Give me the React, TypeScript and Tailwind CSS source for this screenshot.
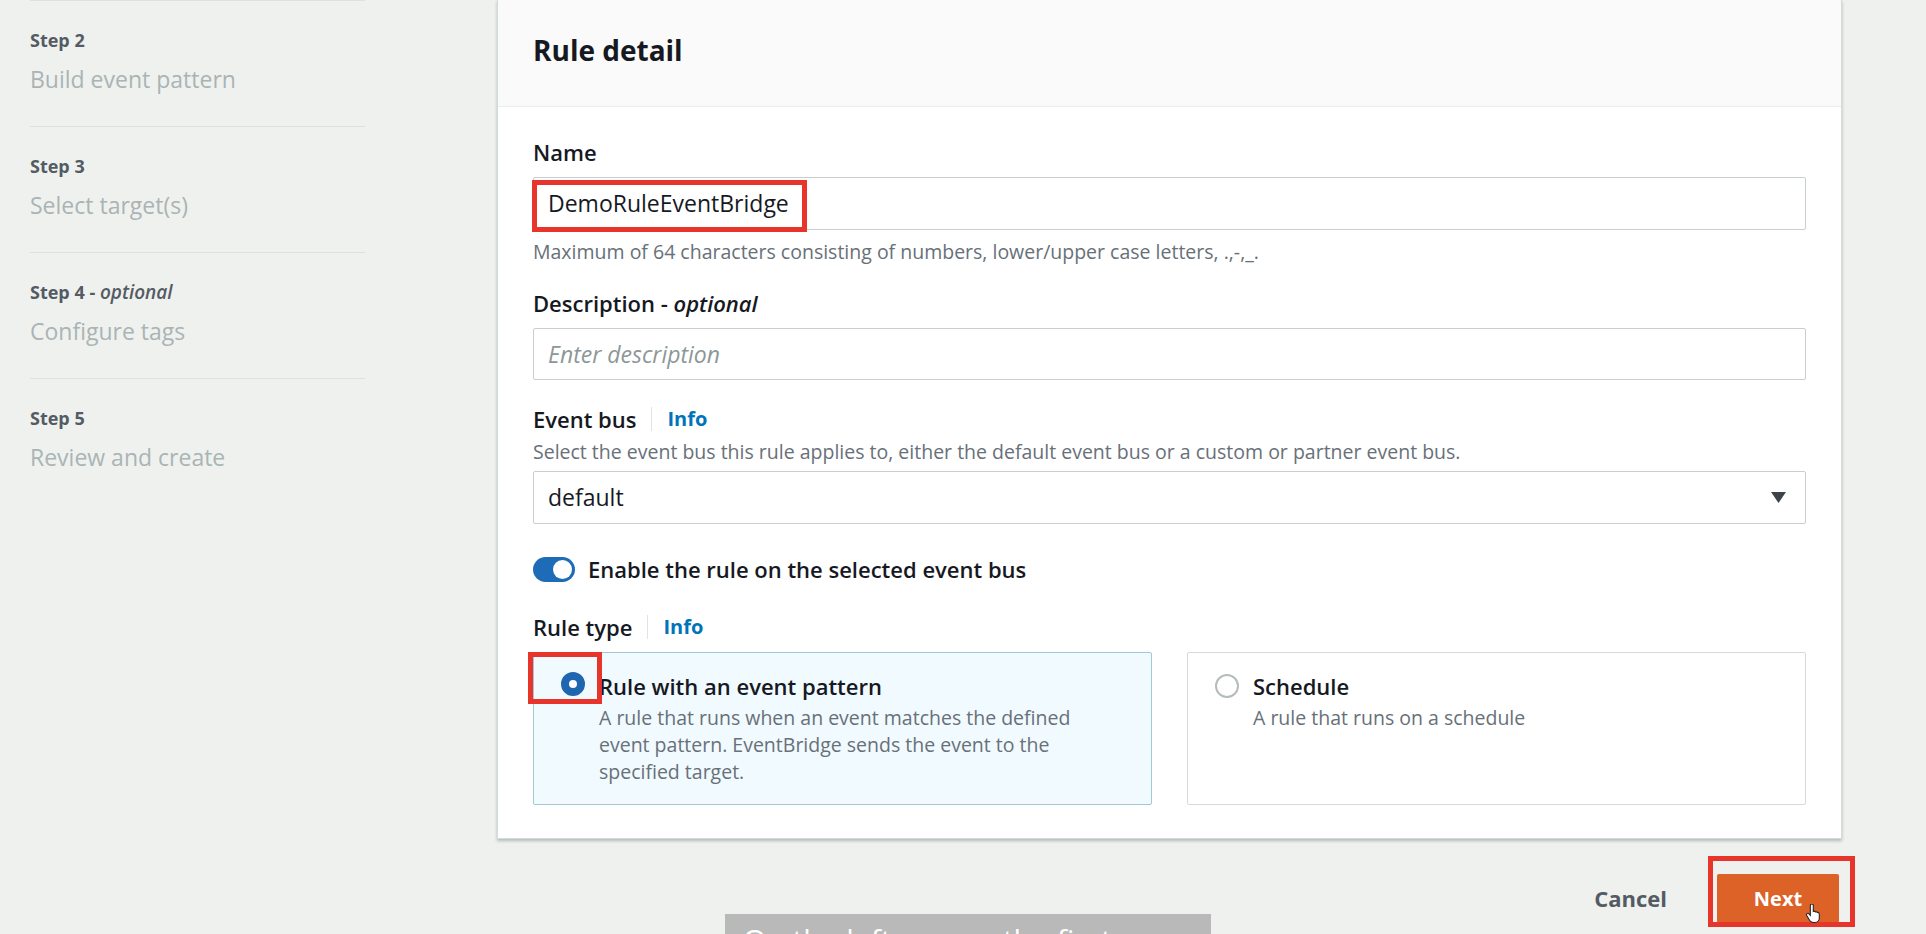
import type { ReactNode } from "react";

const steps = [
  { id: 2, title: "Build event pattern", optional: false },
  { id: 3, title: "Select target(s)", optional: false },
  { id: 4, title: "Configure tags", optional: true },
  { id: 5, title: "Review and create", optional: false },
];

const ruleTypes = [
  {
    id: "pattern",
    title: "Rule with an event pattern",
    lines: [
      "A rule that runs when an event matches the defined",
      "event pattern. EventBridge sends the event to the",
      "specified target.",
    ],
    selected: true,
  },
  {
    id: "schedule",
    title: "Schedule",
    lines: ["A rule that runs on a schedule"],
    selected: false,
  },
];

const FieldLabel = ({ children, info }: { children: ReactNode; info?: boolean }) => (
  <div className="flex items-center h-[28px] text-[22px] leading-[28px] font-semibold text-[#16191f]">
    {children}
    {info && (
      <>
        <span className="mx-[15px] h-[24px] w-px bg-[#e1e4e4]" />
        <span className="text-[20px] font-bold text-[#0073bb]">Info</span>
      </>
    )}
  </div>
);

const HandCursor = () => (
  <svg width="15" height="19" viewBox="0 0 14 18" className="absolute left-[89px] top-[30px]">
    <path
      d="M4 1.5c0-.8.6-1.5 1.4-1.5S6.8.7 6.8 1.5V7l.2-.1c.7-.3 1.5 0 1.8.6.6-.3 1.4-.1 1.8.5.6-.2 1.3.1 1.6.7.2.3.3.7.3 1v3.5c0 2.4-1.8 4.3-4.2 4.3H7c-1.5 0-2.8-.7-3.6-1.9L.6 10.9c-.4-.6-.3-1.4.3-1.8.6-.4 1.3-.3 1.8.2L4 10.7V1.5z"
      fill="white"
      stroke="#222"
      strokeWidth="1"
    />
  </svg>
);

const App = () => {
  return (
    <div className="relative flex w-[1926px] h-[934px] overflow-hidden bg-[#eff1ee] font-['Open_Sans',sans-serif]">
      {/* wizard steps */}
      <aside className="w-[497px] shrink-0 pl-[30px]">
        <ul className="w-[335px]">
          {steps.map((step) => (
            <li key={step.id} className="h-[126px] border-t border-[#dde1e0] pt-[27px]">
              <div className="text-[18px] leading-[24px] font-bold text-[#545b64]">
                Step {step.id}
                {step.optional && (
                  <span>
                    {" - "}
                    <i className="font-semibold text-[19px]">optional</i>
                  </span>
                )}
              </div>
              <div className="mt-[13px] text-[23px] leading-[28px] text-[#aab4b5]">{step.title}</div>
            </li>
          ))}
        </ul>
      </aside>

      <main className="w-[1345px] shrink-0 flex flex-col">
        <section className="bg-white border-x border-b border-[#d5dbdb] shadow-[0_2px_3px_rgba(0,28,36,0.25)]">
          <header className="h-[107px] bg-[#fafafa] border-b border-[#eaeded] px-[35px] pt-[33px]">
            <h2 className="text-[28px] leading-[34px] font-bold text-[#16191f]">Rule detail</h2>
          </header>

          <div className="px-[35px] pt-[31px] pb-[33px]">
            <FieldLabel>Name</FieldLabel>
            <div className="relative mt-[11px]">
              <div className="h-[53px] border border-[#c9cfd0] rounded-[2px] bg-white flex items-center pl-[14px] text-[23px] text-[#16191f]">
                DemoRuleEventBridge
              </div>
              <div className="absolute left-[-1px] top-[3px] w-[275px] h-[52px] border-[5px] border-[#e8352b]" />
            </div>
            <p className="mt-[10px] text-[19.5px] leading-[24px] text-[#687078]">
              Maximum of 64 characters consisting of numbers, lower/upper case letters, .,-,_.
            </p>

            <div className="mt-[25px]">
              <FieldLabel>
                Description -&nbsp;<i>optional</i>
              </FieldLabel>
            </div>
            <div className="mt-[11px] h-[52px] border border-[#c9cfd0] rounded-[2px] bg-white flex items-center pl-[14px] text-[23px] italic text-[#8d9799]">
              Enter description
            </div>

            <div className="mt-[25px]">
              <FieldLabel info>Event bus</FieldLabel>
            </div>
            <p className="mt-[7px] text-[19.5px] leading-[24px] text-[#687078]">
              Select the event bus this rule applies to, either the default event bus or a custom or partner event bus.
            </p>
            <div className="mt-[7px] h-[53px] border border-[#c9cfd0] rounded-[2px] bg-white flex items-center justify-between pl-[14px] pr-[19px] text-[23px] text-[#16191f]">
              <span>default</span>
              <svg width="15" height="11" viewBox="0 0 15 11">
                <path d="M0 0h15L7.5 11z" fill="#3d4349" />
              </svg>
            </div>

            <div className="mt-[31px] flex items-center gap-[13px] h-[28px]">
              <div className="w-[42px] h-[25px] rounded-full bg-[#1e6bb8] flex items-center justify-end pr-[3px]">
                <div className="w-[19px] h-[19px] rounded-full bg-white" />
              </div>
              <span className="text-[22px] leading-[28px] font-semibold text-[#16191f]">
                Enable the rule on the selected event bus
              </span>
            </div>

            <div className="mt-[30px]">
              <FieldLabel info>Rule type</FieldLabel>
            </div>
            <div className="mt-[11px] grid grid-cols-2 gap-[35px]">
              {ruleTypes.map((rt) => (
                <div
                  key={rt.id}
                  className={`relative h-[153px] border rounded-[2px] pt-[19px] pl-[27px] flex items-start gap-[14px] ${
                    rt.selected ? "bg-[#f1faff] border-[#a3c9d6]" : "bg-white border-[#d5dbdb]"
                  }`}
                >
                  {rt.selected ? (
                    <div className="mt-[0px] w-[24px] h-[24px] shrink-0 rounded-full border-[8px] border-[#1f66b0] bg-white" />
                  ) : (
                    <div className="mt-[2px] w-[24px] h-[24px] shrink-0 rounded-full border-2 border-[#b4bcbd] bg-white" />
                  )}
                  <div>
                    <div className="text-[22px] leading-[28px] font-semibold text-[#16191f]">{rt.title}</div>
                    <p className="mt-[4px] text-[19.5px] leading-[27px] text-[#687078]">
                      {rt.lines.map((line) => (
                        <span key={line} className="block">
                          {line}
                        </span>
                      ))}
                    </p>
                  </div>
                  {rt.selected && (
                    <div className="absolute left-[-6px] top-[-1px] w-[74px] h-[52px] border-[5px] border-[#e8352b]" />
                  )}
                </div>
              ))}
            </div>
          </div>
        </section>

        <div className="mt-[35px] flex items-center justify-end pr-[3px]">
          <button className="mr-[50px] text-[22px] font-bold text-[#545b64]">Cancel</button>
          <div className="relative">
            <button className="w-[122px] h-[49px] rounded-[2px] bg-[#dc6227] text-[20px] font-bold text-white">
              Next
            </button>
            <div className="absolute left-[-9px] top-[-18px] w-[147px] h-[71px] border-[5px] border-[#e8352b]" />
            <HandCursor />
          </div>
        </div>
      </main>

      {/* video caption overlay */}
      <div className="absolute left-[725px] top-[914px] w-[486px] h-[40px] bg-[#b8b9b8] pl-[18px] pt-[9px] text-[30px] leading-[34px] text-white whitespace-nowrap overflow-hidden">
        On the left we see the first
      </div>
    </div>
  );
};

export default App;
